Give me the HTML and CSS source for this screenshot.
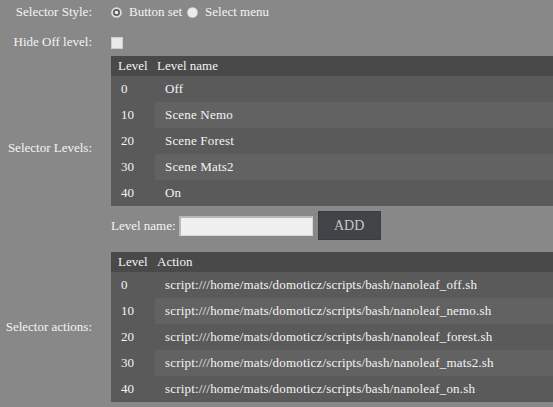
FILE: index.html
```html
<!DOCTYPE html>
<html>
<head>
<meta charset="utf-8">
<link rel="stylesheet" href="styles.css">
</head>
<body>
<div class="form">
  <div class="row r-style">
    <div class="label">Selector Style:</div>
    <div class="content radios">
      <span class="radio on"><svg width="11" height="11" viewBox="0 0 12 12"><circle cx="6" cy="6" r="5.8" fill="#dcdcdc"/><circle cx="6" cy="6" r="3.8" fill="#5c5c5c"/><circle cx="6" cy="6" r="1.9" fill="#f4f4f4"/></svg></span>
      <span class="rtext">Button set</span>
      <span class="radio"><svg width="11" height="11" viewBox="0 0 12 12"><circle cx="6" cy="6" r="5.8" fill="#e0e0e0"/><circle cx="6" cy="6" r="4.6" fill="#ececec"/></svg></span>
      <span class="rtext">Select menu</span>
    </div>
  </div>
  <div class="row r-hide">
    <div class="label">Hide Off level:</div>
    <div class="content"><span class="check"></span></div>
  </div>
  <div class="row r-levels">
    <div class="label">Selector Levels:</div>
    <div class="content">
      <table class="grid">
        <thead><tr><th class="c1">Level</th><th class="c2">Level name</th></tr></thead>
        <tbody>
          <tr><td class="c1">0</td><td class="c2">Off</td></tr>
          <tr class="alt"><td class="c1">10</td><td class="c2">Scene Nemo</td></tr>
          <tr><td class="c1">20</td><td class="c2">Scene Forest</td></tr>
          <tr class="alt"><td class="c1">30</td><td class="c2">Scene Mats2</td></tr>
          <tr><td class="c1">40</td><td class="c2">On</td></tr>
        </tbody>
      </table>
      <div class="addrow">
        <span class="addlabel">Level name:</span>
        <span class="input"></span>
        <span class="btn">ADD</span>
      </div>
    </div>
  </div>
  <div class="row r-actions">
    <div class="label">Selector actions:</div>
    <div class="content">
      <table class="grid">
        <thead><tr><th class="c1">Level</th><th class="c2">Action</th></tr></thead>
        <tbody>
          <tr><td class="c1">0</td><td class="c2">script:///home/mats/domoticz/scripts/bash/nanoleaf_off.sh</td></tr>
          <tr class="alt"><td class="c1">10</td><td class="c2">script:///home/mats/domoticz/scripts/bash/nanoleaf_nemo.sh</td></tr>
          <tr><td class="c1">20</td><td class="c2">script:///home/mats/domoticz/scripts/bash/nanoleaf_forest.sh</td></tr>
          <tr class="alt"><td class="c1">30</td><td class="c2">script:///home/mats/domoticz/scripts/bash/nanoleaf_mats2.sh</td></tr>
          <tr><td class="c1">40</td><td class="c2">script:///home/mats/domoticz/scripts/bash/nanoleaf_on.sh</td></tr>
        </tbody>
      </table>
    </div>
  </div>
</div>
</body>
</html>
```

FILE: styles.css
```css
html, body {
  margin: 0;
  padding: 0;
  background: #888888;
  width: 553px;
  height: 407px;
  overflow: hidden;
}
body {
  font-family: "Liberation Serif", "Times New Roman", serif;
  font-size: 13px;
  color: #f4f4f4;
}
.form {
  display: flex;
  flex-direction: column;
}
.row {
  display: flex;
  align-items: center;
}
.label {
  width: 92px;
  flex: 0 0 92px;
  text-align: right;
  padding-right: 19px;
  white-space: nowrap;
}
.content {
  flex: 1;
  min-width: 0;
}
.r-style {
  height: 24px;
}
.r-hide {
  height: 24px;
  margin-top: 6px;
}
.r-levels {
  margin-top: 2px;
}
.r-actions {
  margin-top: 12px;
}
.radios {
  display: flex;
  align-items: center;
}
.radio {
  display: inline-flex;
  width: 11px;
  height: 11px;
}
.rtext {
  margin: 0 5px 0 7px;
}
.check {
  display: block;
  width: 10px;
  height: 10px;
  background: #eaeaea;
  border: 1px solid #cfcfcf;
  margin-top: 1px;
}
.grid {
  width: 442px;
  border-collapse: collapse;
  border-spacing: 0;
  background: #5a5a5a;
}
.grid th {
  background: #494949;
  height: 20px;
  padding: 0;
  font-weight: normal;
  text-align: left;
  white-space: nowrap;
}
.grid th.c1 {
  width: 44px;
  padding-left: 7px;
  box-sizing: border-box;
}
.grid th.c2 {
  padding-left: 2px;
}
.grid td {
  height: 26px;
  padding: 0;
  white-space: nowrap;
}
.grid td.c1 {
  padding-left: 10px;
}
.grid td.c2 {
  padding-left: 10px;
  letter-spacing: 0.18px;
}
.grid tr.alt td.c2 {
  background: #626262;
}
.addrow {
  display: flex;
  align-items: center;
  height: 29px;
  margin-top: 5px;
}
.addlabel {
  margin-right: 3px;
}
.input {
  display: block;
  width: 131px;
  height: 17px;
  background: #f0f0f0;
  border-top: 2px solid #b8b8b8;
  border-left: 2px solid #b8b8b8;
  border-right: 1px solid #d8d8d8;
  border-bottom: 1px solid #d8d8d8;
}
.btn {
  display: flex;
  align-items: center;
  justify-content: center;
  width: 61px;
  height: 27px;
  margin-left: 5px;
  background: #404447;
  border: 1px solid #3a3d40;
  color: #c8c8c8;
  font-size: 14px;
}
```
